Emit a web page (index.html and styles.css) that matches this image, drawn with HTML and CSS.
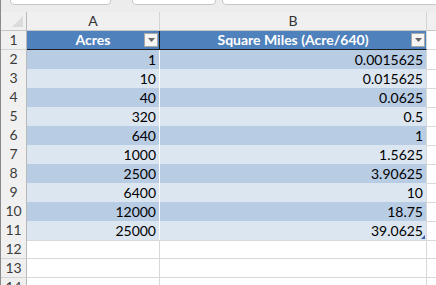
FILE: index.html
```html
<!DOCTYPE html>
<html>
<head>
<meta charset="utf-8">
<link rel="stylesheet" href="styles.css">
</head>
<body>
<div class="sheet">
  <div class="ribbon">
    <div class="tab tab1"></div>
    <div class="tab tab2"></div>
    <div class="tab tab3"></div>
  </div>
  <div class="row colhead">
    <div class="rh corner"><span class="tri"></span></div>
    <div class="ch">A</div>
    <div class="ch">B</div>
    <div class="ch rest"></div>
  </div>
  <div class="row">
    <div class="rh">1</div>
    <div class="c th">Acres<span class="dd"><svg width="7" height="4" viewBox="0 0 7 4"><path d="M0 0H7L3.5 4Z" fill="#666"/></svg></span></div>
    <div class="c th thb">Square Miles (Acre/640)<span class="dd"><svg width="7" height="4" viewBox="0 0 7 4"><path d="M0 0H7L3.5 4Z" fill="#666"/></svg></span></div>
    <div class="c rest"></div>
  </div>
  <div class="row"><div class="rh">2</div><div class="c d1">1</div><div class="c d1 b">0.0015625</div><div class="c rest"></div></div>
  <div class="row"><div class="rh">3</div><div class="c d2">10</div><div class="c d2 b">0.015625</div><div class="c rest"></div></div>
  <div class="row"><div class="rh">4</div><div class="c d1">40</div><div class="c d1 b">0.0625</div><div class="c rest"></div></div>
  <div class="row"><div class="rh">5</div><div class="c d2">320</div><div class="c d2 b">0.5</div><div class="c rest"></div></div>
  <div class="row"><div class="rh">6</div><div class="c d1">640</div><div class="c d1 b">1</div><div class="c rest"></div></div>
  <div class="row"><div class="rh">7</div><div class="c d2">1000</div><div class="c d2 b">1.5625</div><div class="c rest"></div></div>
  <div class="row"><div class="rh">8</div><div class="c d1">2500</div><div class="c d1 b">3.90625</div><div class="c rest"></div></div>
  <div class="row"><div class="rh">9</div><div class="c d2">6400</div><div class="c d2 b">10</div><div class="c rest"></div></div>
  <div class="row"><div class="rh">10</div><div class="c d1">12000</div><div class="c d1 b">18.75</div><div class="c rest"></div></div>
  <div class="row"><div class="rh">11</div><div class="c d2 last">25000</div><div class="c d2 b last">39.0625<span class="handle"></span></div><div class="c rest"></div></div>
  <div class="row"><div class="rh">12</div><div class="c"></div><div class="c"></div><div class="c rest"></div></div>
  <div class="row"><div class="rh">13</div><div class="c"></div><div class="c"></div><div class="c rest"></div></div>
  <div class="row"><div class="rh">14</div><div class="c"></div><div class="c"></div><div class="c rest"></div></div>
</div>
</body>
</html>
```
FILE: styles.css
```css
html, body {
  margin: 0;
  padding: 0;
  background: #ffffff;
}
body {
  width: 436px;
  height: 285px;
  overflow: hidden;
  font-family: Lato, "Liberation Sans", sans-serif;
  font-size: 14px;
  color: #000;
}
.sheet {
  border-left: 1px solid #8a8a8a;
  height: 285px;
  box-sizing: border-box;
}
.ribbon {
  height: 12px;
  background: #ececec;
  position: relative;
  overflow: hidden;
}
.tab {
  position: absolute;
  top: -6px;
  height: 9px;
  background: #ffffff;
  border: 1px solid #c8c8c8;
  border-radius: 0 0 4px 4px;
}
.tab1 { left: 9px; width: 99px; }
.tab2 { left: 131px; width: 82px; }
.tab3 { left: 221px; width: 220px; }
.row {
  display: grid;
  grid-template-columns: 26px 133px 267px 1fr;
  height: 19px;
}
.colhead {
  height: 19px;
  background: #f0f0f0;
}
.rh, .ch {
  box-sizing: border-box;
  background: #f0f0f0;
  color: #444;
  text-align: center;
  font-size: 14px;
  line-height: 18px;
  border-right: 1px solid #d4d4d4;
  border-bottom: 1px solid #d4d4d4;
}
.rh {
  border-right: 1px solid #b9b9b9;
  color: #3c3c3c;
}
.colhead .ch {
  border-bottom: 1px solid #c6c6c6;
  color: #333;
}
.ch.rest {
  border-right: none;
}
.corner {
  position: relative;
  border-bottom: 1px solid #c6c6c6;
}
.tri {
  position: absolute;
  right: 3px;
  bottom: 3px;
  width: 0;
  height: 0;
  border-left: 11px solid transparent;
  border-bottom: 11px solid #dcdcdc;
}
.c {
  box-sizing: border-box;
  border-right: 1px solid #d9d9d9;
  border-bottom: 1px solid #d9d9d9;
  text-align: right;
  padding-right: 3px;
  line-height: 19px;
  white-space: nowrap;
  position: relative;
}
.c.rest {
  border-right: none;
}
.th {
  background: #4f81bd;
  color: #ffffff;
  font-weight: bold;
  text-align: center;
  padding-right: 0;
  border-right: 1px solid #1e1e1e;
  border-bottom: 1px solid #1e1e1e;
  line-height: 18px;
}
.thb {
  border-right: 1px solid #d9d9d9;
  text-align: center;
}
.dd {
  position: absolute;
  right: 1px;
  top: 2px;
  width: 14px;
  height: 14px;
  box-sizing: border-box;
  background: #f5f5f5;
  border: 1px solid #a8a8a8;
  display: flex;
  align-items: center;
  justify-content: center;
}
.d1, .d2 {
  border-right-color: #ffffff;
  border-bottom-color: #ffffff;
}
.d1 { background: #b8cce4; }
.d2 { background: #dce6f1; }
.d1.b, .d2.b { border-right-color: #d9d9d9; }
.last { border-bottom-color: #d9d9d9; }
.handle {
  position: absolute;
  right: 1px;
  bottom: 1px;
  width: 0;
  height: 0;
  border-left: 4px solid transparent;
  border-bottom: 4px solid #3a5fb0;
}
```
